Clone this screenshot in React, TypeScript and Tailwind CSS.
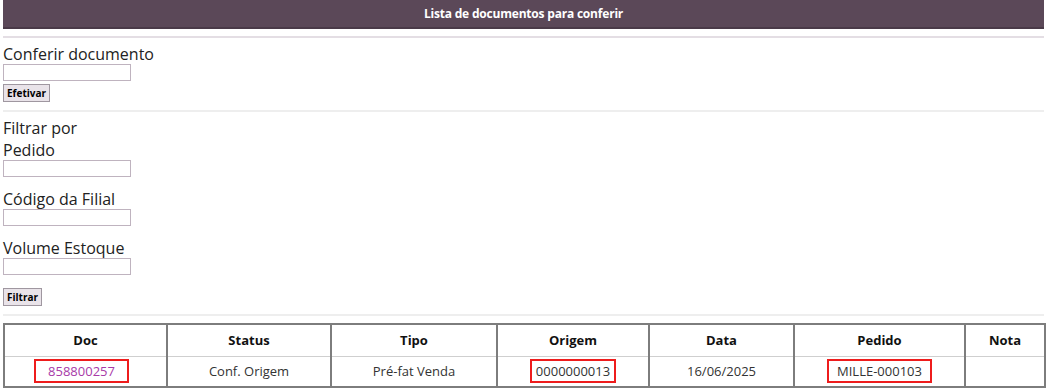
import React from "react";

const cols = [
  { name: "Doc", w: "w-[163px]" },
  { name: "Status", w: "w-[164px]" },
  { name: "Tipo", w: "w-[166px]" },
  { name: "Origem", w: "w-[152px]" },
  { name: "Data", w: "w-[145px]" },
  { name: "Pedido", w: "w-[171px]" },
  { name: "Nota", w: "w-[80px]" },
];

const Field = ({ label, mt }: { label: string; mt: string }) => (
  <div className={mt}>
    <div className="text-[16px] leading-[20px] text-[#222]">{label}</div>
    <input className="block w-[128px] h-[17px] border border-[#bfb3bf] bg-white" />
  </div>
);

const App = () => {
  return (
    <div
      className="w-[1047px] h-[390px] bg-white px-[3px] overflow-hidden"
      style={{ fontFamily: '"Open Sans", "Noto Sans", sans-serif' }}
    >
      {/* barra do título */}
      <div className="h-[29px] bg-[#5b4858] border-b-2 border-[#4a3a48] flex items-center justify-center">
        <span className="text-white text-[12px] font-bold tracking-[-0.2px]">Lista de documentos para conferir</span>
      </div>
      <div className="mt-[7px] border-t-2 border-[#e4dee4]" />

      {/* conferir documento */}
      <div className="mt-[6px] text-[16px] leading-[20px] text-[#222]">Conferir documento</div>
      <input className="block w-[128px] h-[17px] border border-[#bfb3bf] bg-white" />
      <button className="block mt-[3px] h-[18px] px-[3px] bg-[#e9e3e9] border border-[#9f97a0] text-[10px] font-bold text-black leading-none">
        Efetivar
      </button>
      <div className="mt-[8px] border-t-2 border-[#eeeeee]" />

      {/* filtros */}
      <div className="mt-[5px] text-[16px] leading-[23px] text-[#222]">Filtrar por</div>
      <Field label="Pedido" mt="" />
      <Field label="Código da Filial" mt="mt-[12px]" />
      <Field label="Volume Estoque" mt="mt-[12px]" />
      <button className="block mt-[13px] h-[18px] px-[3px] bg-[#e9e3e9] border border-[#9f97a0] text-[10px] font-bold text-black leading-none">
        Filtrar
      </button>
      <div className="mt-[8px] border-t-2 border-[#eeeeee]" />

      {/* tabela */}
      <table className="mt-[7px] w-[1041px] border-collapse border-2 border-[#7d7d7d] table-fixed text-[13px] text-[#333]">
        <thead>
          <tr className="h-[32px]">
            {cols.map((c) => (
              <th key={c.name} className={`${c.w} border-x-2 border-[#7d7d7d] border-b border-b-[#cfcfcf] font-bold text-[#111]`}>
                {c.name}
              </th>
            ))}
          </tr>
        </thead>
        <tbody>
          <tr className="h-[31px] text-center">
            <td className="border-x-2 border-[#7d7d7d]">
              <span className="inline-block border-2 border-[#ee1c1c] px-[12px] leading-[20px] text-[#a83aa8] mr-[8px]">858800257</span>
            </td>
            <td className="border-x-2 border-[#7d7d7d]">Conf. Origem</td>
            <td className="border-x-2 border-[#7d7d7d]">Pré-fat Venda</td>
            <td className="border-x-2 border-[#7d7d7d]">
              <span className="inline-block border-2 border-[#ee1c1c] px-[4px] leading-[20px]">0000000013</span>
            </td>
            <td className="border-x-2 border-[#7d7d7d]">16/06/2025</td>
            <td className="border-x-2 border-[#7d7d7d]">
              <span className="inline-block border-2 border-[#ee1c1c] px-[8px] leading-[20px]">MILLE-000103</span>
            </td>
            <td className="border-x-2 border-[#7d7d7d]"></td>
          </tr>
        </tbody>
      </table>
    </div>
  );
};

export default App;
